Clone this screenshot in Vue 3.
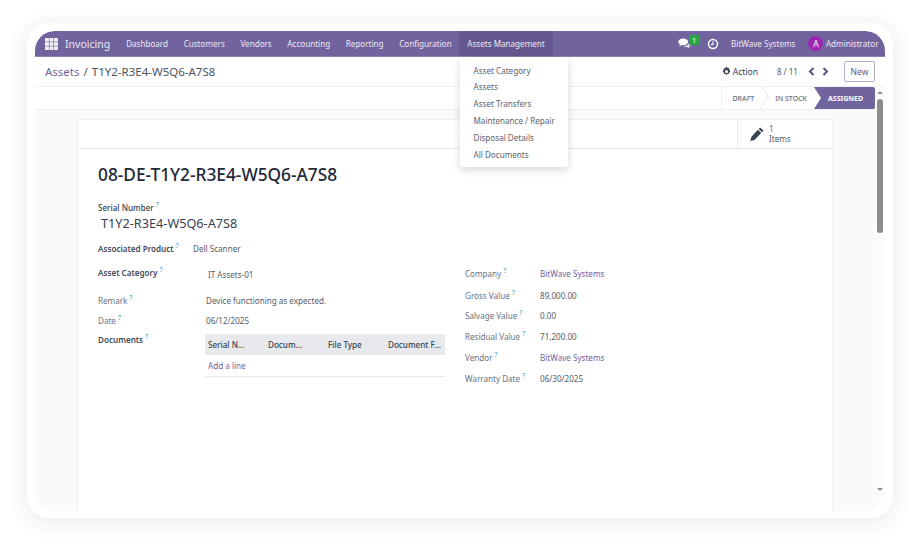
<template>
  <div class="page">
    <div class="frame">
      <div class="app">
        <header class="navbar">
          <svg class="apps-icon" width="13" height="12" viewBox="0 0 13 12">
            <g fill="#f3f0f7">
              <template v-for="row in 3" :key="row">
                <rect v-for="col in 3" :key="col" :x="(col - 1) * 4.5" :y="(row - 1) * 4.2" width="3.9" height="3.6" />
              </template>
            </g>
          </svg>
          <span class="brand">Invoicing</span>
          <nav class="menu">
            <a v-for="item in menu" :key="item" class="menu-item">{{ item }}</a>
            <a class="menu-item active">Assets Management</a>
          </nav>
          <div class="systray">
            <span class="chat">
              <svg width="13" height="11" viewBox="0 0 13 11">
                <path d="M5.2 0.6C2.4 0.6 0.3 2.1 0.3 4c0 1.1.7 2 1.8 2.6-.2.6-.5 1.1-1 1.5 1 0 1.9-.4 2.6-1 .5.1 1 .2 1.5.2 2.8 0 4.9-1.5 4.9-3.3S8 .6 5.2.6z" fill="#fff" />
                <path d="M11 4.4c0 2.1-2.3 3.7-5 3.7h-.5c.8.8 2 1.2 3.3 1.2.4 0 .7 0 1-.1.6.5 1.3.8 2.1.8-.4-.3-.7-.8-.8-1.3.9-.5 1.5-1.3 1.5-2.2 0-.9-.6-1.7-1.6-2.1z" fill="#fff" opacity=".85" />
              </svg>
              <span class="badge">1</span>
            </span>
            <svg class="clock" width="12" height="12" viewBox="0 0 12 12">
              <circle cx="6" cy="6" r="4.5" fill="none" stroke="#fff" stroke-width="1.5" />
              <path d="M6 3.2V6.3L3.9 7" fill="none" stroke="#fff" stroke-width="1.1" />
            </svg>
            <span class="company">BitWave Systems</span>
            <span class="avatar">A</span>
            <span class="user">Administrator</span>
          </div>
        </header>

        <div class="dropdown">
          <a v-for="item in assetMenu" :key="item">{{ item }}</a>
        </div>

        <div class="control-panel">
          <div class="breadcrumb">
            <a>Assets</a>
            <span class="crumb-sep">/</span>
            <span>T1Y2-R3E4-W5Q6-A7S8</span>
          </div>
          <div class="cp-right">
            <span class="action">
              <svg width="9" height="9" viewBox="0 0 10 10">
                <path d="M4.2 0h1.6l.3 1.4 1-.5 1.2 1.2-.6 1 1.3.4v1.7l-1.3.3.6 1.1-1.2 1.2-1.1-.6-.3 1.3H4.2l-.3-1.3-1.1.6-1.2-1.2.6-1.1L.9 5.5V3.8l1.3-.3-.6-1.1 1.2-1.2 1 .6zM5 3.3a1.7 1.7 0 1 0 0 3.4 1.7 1.7 0 0 0 0-3.4z" fill="#374151" fill-rule="evenodd" />
              </svg>
              Action
            </span>
            <span class="pager">8 / 11</span>
            <span class="arrows">
              <svg width="7" height="9" viewBox="0 0 7 9"><path d="M5.5 1L2 4.5L5.5 8" fill="none" stroke="#5f4f87" stroke-width="2" /></svg>
              <svg width="7" height="9" viewBox="0 0 7 9"><path d="M1.5 1L5 4.5L1.5 8" fill="none" stroke="#5f4f87" stroke-width="2" /></svg>
            </span>
            <button class="new-btn">New</button>
          </div>
        </div>

        <div class="workspace">
          <div class="left-pane">
            <div class="status-row">
              <div class="status-bar">
                <span class="step first">DRAFT</span>
                <span class="step">IN STOCK</span>
                <span class="step current">ASSIGNED</span>
              </div>
            </div>

            <main class="content">
              <section class="sheet">
                <div class="button-box">
                  <div class="stat">
                    <svg width="14" height="14" viewBox="0 0 14 14">
                      <path d="M10.2.5l3.3 3.3-1.5 1.5-3.3-3.3zM7.9 2.8l3.3 3.3-6.8 6.8-4 1 1-4.1z" fill="#374151" />
                    </svg>
                    <div class="stat-text">
                      <span class="stat-num">1</span>
                      <span>Items</span>
                    </div>
                  </div>
                </div>

                <div class="sheet-body">
                  <h1 class="title">08-DE-T1Y2-R3E4-W5Q6-A7S8</h1>
                  <div class="serial-label">Serial Number<sup>?</sup></div>
                  <div class="serial-value">T1Y2-R3E4-W5Q6-A7S8</div>
                  <div class="product-row">
                    <span class="strong-label">Associated Product<sup>?</sup></span>
                    <span class="product-value">Dell Scanner</span>
                  </div>

                  <div class="columns">
                    <div class="col-left">
                      <div class="field cat">
                        <span class="strong-label">Asset Category<sup>?</sup></span>
                        <span class="cat-value">IT Assets-01</span>
                      </div>
                      <div class="field remark">
                        <span class="label">Remark<sup>?</sup></span>
                        <span>Device functioning as expected.</span>
                      </div>
                      <div class="field date">
                        <span class="label">Date<sup>?</sup></span>
                        <span>06/12/2025</span>
                      </div>
                      <div class="field docs">
                        <span class="strong-label docs-label">Documents<sup>?</sup></span>
                        <div class="doc-table">
                          <div class="doc-head">
                            <span v-for="col in docColumns" :key="col">{{ col }}</span>
                          </div>
                          <div class="doc-add"><a>Add a line</a></div>
                        </div>
                      </div>
                    </div>

                    <div class="col-right">
                      <div v-for="row in rightFields" :key="row.label" class="right-row" :style="{ height: row.height + 'px' }">
                        <span class="right-label">{{ row.label }}<sup>?</sup></span>
                        <a v-if="row.link" class="link">{{ row.value }}</a>
                        <span v-else>{{ row.value }}</span>
                      </div>
                    </div>
                  </div>
                </div>
              </section>
            </main>
          </div>

          <div class="scrollbar">
            <span class="arrow-up"></span>
            <span class="thumb"></span>
            <span class="arrow-down"></span>
          </div>
        </div>
      </div>
    </div>
  </div>
</template>

<script setup>
const menu = ['Dashboard', 'Customers', 'Vendors', 'Accounting', 'Reporting', 'Configuration']

const assetMenu = [
  'Asset Category',
  'Assets',
  'Asset Transfers',
  'Maintenance / Repair',
  'Disposal Details',
  'All Documents'
]

const docColumns = ['Serial N...', 'Docum...', 'File Type', 'Document F...']

const rightFields = [
  { label: 'Company', value: 'BitWave Systems', link: true, height: 24 },
  { label: 'Gross Value', value: '89,000.00', height: 20 },
  { label: 'Salvage Value', value: '0.00', height: 20 },
  { label: 'Residual Value', value: '71,200.00', height: 22 },
  { label: 'Vendor', value: 'BitWave Systems', link: true, height: 20 },
  { label: 'Warranty Date', value: '06/30/2025', height: 22 }
]
</script>

<style>
html,
body {
  margin: 0;
  background: #fff;
}
</style>

<style scoped>
.page {
  width: 920px;
  height: 550px;
  padding: 23px 27px 32px;
  box-sizing: border-box;
  overflow: hidden;
  background: #fff;
  font-family: "Noto Sans", "Open Sans", sans-serif;
  font-size: 8.1px;
  color: #565e6a;
}

.frame {
  height: 495px;
  padding: 8px 8px 7px;
  box-sizing: border-box;
  background: #fff;
  border-radius: 22px;
  box-shadow: 0 3px 22px rgba(40, 40, 60, 0.11);
}

.app {
  position: relative;
  display: flex;
  flex-direction: column;
  height: 480px;
  overflow: hidden;
  border-radius: 20px;
  background: #fff;
}

.navbar {
  display: flex;
  align-items: center;
  flex: 0 0 26px;
  padding-left: 10px;
  background: #71639e;
  border-bottom: 1px solid #8d81b3;
  box-sizing: border-box;
  color: #ece8f3;
}

.apps-icon {
  margin-right: 7px;
}

.brand {
  font-size: 10.5px;
  margin-right: 8.2px;
}

.menu {
  display: flex;
  align-self: stretch;
}

.menu-item {
  display: flex;
  align-items: center;
  padding: 0 7.8px;
}

.menu-item.active {
  background: #655890;
}

.systray {
  display: flex;
  align-items: center;
  margin-left: auto;
  padding-right: 6.5px;
}

.chat {
  position: relative;
  display: flex;
  margin-right: 16px;
}

.badge {
  position: absolute;
  top: -3px;
  left: 11px;
  width: 10px;
  height: 10px;
  background: #28a745;
  border-radius: 1px;
  color: #fff;
  font-size: 7.5px;
  line-height: 10px;
  text-align: center;
}

.clock {
  margin-right: 12px;
}

.company {
  margin-right: 13px;
}

.avatar {
  width: 15px;
  height: 15px;
  margin-right: 2.5px;
  border-radius: 50%;
  background: #9c27b0;
  color: #fff;
  font-size: 8.5px;
  line-height: 15px;
  text-align: center;
}

.dropdown {
  position: absolute;
  top: 26px;
  left: 425px;
  z-index: 5;
  display: flex;
  flex-direction: column;
  width: 108px;
  height: 110px;
  padding: 5.5px 0 0 13.5px;
  box-sizing: border-box;
  background: #fff;
  border-radius: 0 0 3px 3px;
  box-shadow: 0 3px 8px rgba(0, 0, 0, 0.16);
  color: #5b6470;
}

.dropdown a {
  height: 16.9px;
  line-height: 16.9px;
}

.control-panel {
  display: flex;
  align-items: center;
  justify-content: space-between;
  flex: 0 0 30px;
  padding: 0 10px;
  box-sizing: border-box;
  border-bottom: 1px solid #eef0f3;
}

.breadcrumb {
  font-size: 11.5px;
  color: #4b5563;
}

.breadcrumb a {
  color: #71639e;
}

.crumb-sep {
  margin: 0 4px;
}

.cp-right {
  display: flex;
  align-items: center;
}

.action {
  display: flex;
  align-items: center;
  gap: 2px;
  margin-right: 19px;
  font-size: 8.5px;
  color: #374151;
}

.pager {
  margin-right: 10px;
  font-size: 8.1px;
}

.arrows {
  display: flex;
  gap: 7px;
  margin-right: 15px;
}

.new-btn {
  width: 31px;
  height: 21px;
  padding: 0;
  background: #fff;
  border: 1px solid #b5aecd;
  border-radius: 2px;
  color: #5f5a78;
  font-family: inherit;
  font-size: 8.5px;
}

.workspace {
  display: flex;
  flex: 1;
  min-height: 0;
}

.left-pane {
  display: flex;
  flex-direction: column;
  flex: 1;
  min-width: 0;
}

.status-row {
  display: flex;
  justify-content: flex-end;
  flex: 0 0 23px;
  box-sizing: border-box;
  border-bottom: 1px solid #eef0f3;
}

.status-bar {
  display: flex;
  height: 22px;
  font-size: 7px;
  font-weight: 500;
  color: #6b7280;
}

.step {
  position: relative;
  display: flex;
  align-items: center;
  padding: 0 7px 0 21px;
}

.step.first {
  padding-left: 11px;
  padding-right: 0;
  border-left: 1px solid #eef0f3;
}

.step.first::after {
  content: "";
  position: absolute;
  top: 3px;
  right: -13px;
  width: 11px;
  height: 15px;
  border-top: 1px solid #e5e7eb;
  border-right: 1px solid #e5e7eb;
  transform: rotate(45deg) skew(12deg, 12deg);
}

.step.current {
  width: 61px;
  padding: 0 0 0 14px;
  box-sizing: border-box;
  background: #71639e;
  color: #fff;
  font-weight: 700;
  border-radius: 0 2px 2px 0;
  clip-path: polygon(0 0, 100% 0, 100% 100%, 0 100%, 7px 50%);
}

.content {
  flex: 1;
  min-height: 0;
  padding: 9px 42px 0;
  background: #f9fafb;
}

.sheet {
  height: 100%;
  background: #fff;
  border: 1px solid #eef0f3;
  border-bottom: 0;
  box-sizing: border-box;
}

.button-box {
  display: flex;
  justify-content: flex-end;
  height: 29px;
  border-bottom: 1px solid #e7e9ed;
  box-sizing: border-box;
}

.stat {
  display: flex;
  align-items: center;
  gap: 5px;
  width: 95px;
  padding-left: 12px;
  box-sizing: border-box;
  border-left: 1px solid #e7e9ed;
}

.stat-text {
  display: flex;
  flex-direction: column;
  line-height: 10px;
}

.stat-num {
  color: #71639e;
}

.sheet-body {
  padding: 13px 20px 0;
}

.title {
  margin: 0;
  height: 25px;
  font-size: 17.3px;
  font-weight: 500;
  line-height: 25px;
  color: #1f2937;
}

sup {
  margin-left: 2px;
  font-size: 6.5px;
  line-height: 0;
  color: #62b4cf;
  vertical-align: 4px;
  font-weight: 600;
}

.serial-label {
  margin-top: 15px;
  height: 12px;
  font-weight: 500;
  line-height: 12px;
  color: #374151;
}

.serial-value {
  height: 20px;
  margin-top: -1px;
  padding-left: 3px;
  font-size: 12.7px;
  line-height: 20px;
  color: #374151;
}

.product-row {
  display: flex;
  align-items: center;
  height: 14px;
  margin-top: 8px;
}

.product-row .strong-label {
  flex: 0 0 95px;
}

.strong-label {
  font-weight: 600;
  color: #434b58;
}

.product-value {
  padding-top: 1px;
}

.columns {
  display: flex;
  margin-top: 6px;
}

.col-left {
  width: 347px;
  margin-right: 20px;
}

.field {
  display: flex;
  align-items: center;
}

.field > span:first-child {
  flex: 0 0 108px;
}

.cat {
  height: 22px;
}

.cat-value {
  margin-left: 2px;
  padding-top: 5px;
}

.remark {
  height: 20px;
  margin-top: 7px;
}

.date {
  height: 20px;
}

.label {
  color: #6b7280;
}

.docs {
  align-items: flex-start;
  margin-top: 4px;
}

.doc-table {
  flex: 1;
  margin-left: -1px;
}

.doc-head {
  display: grid;
  grid-template-columns: repeat(4, 1fr);
  align-items: center;
  height: 21px;
  background: #e7e9ed;
  font-weight: 500;
  color: #374151;
}

.doc-head span {
  padding-left: 3px;
  white-space: nowrap;
}

.doc-add {
  display: flex;
  align-items: center;
  height: 21px;
  padding-left: 3px;
  border-bottom: 1px solid #e7e9ed;
  color: #71639e;
}

.col-right {
  flex: 1;
}

.right-row {
  display: flex;
  align-items: center;
}

.right-label {
  flex: 0 0 75px;
  color: #6b7280;
}

.link {
  color: #71639e;
}

.scrollbar {
  display: flex;
  flex-direction: column;
  align-items: center;
  flex: 0 0 10px;
  background: #fcfcfd;
}

.arrow-up {
  margin-top: 4px;
  border: 3px solid transparent;
  border-top: 0;
  border-bottom: 3px solid #8c8c8c;
}

.thumb {
  width: 6px;
  height: 134px;
  margin-top: 5px;
  background: #8c8c8c;
  border-radius: 3px;
}

.arrow-down {
  margin-top: auto;
  margin-bottom: 20px;
  border: 3px solid transparent;
  border-bottom: 0;
  border-top: 3px solid #8c8c8c;
}
</style>
